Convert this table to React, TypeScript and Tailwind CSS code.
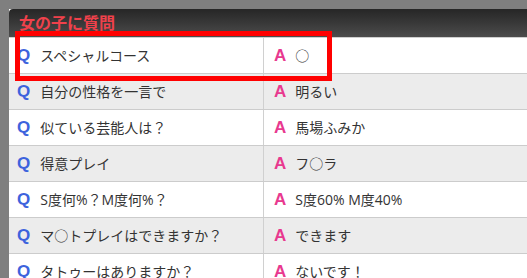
const rows = [
  { q: 'スペシャルコース', a: '○' },
  { q: '自分の性格を一言で', a: '明るい' },
  { q: '似ている芸能人は？', a: '馬場ふみか' },
  { q: '得意プレイ', a: 'フ○ラ' },
  { q: 'S度何%？M度何%？', a: 'S度60% M度40%' },
  { q: 'マ○トプレイはできますか？', a: 'できます' },
  { q: 'タトゥーはありますか？', a: 'ないです！' },
];

export default function App() {
  return (
    <div
      className="relative h-[278px] w-[527px] overflow-hidden bg-[#7f7f7f] pl-[9px] pt-[9px]"
      style={{ fontFamily: '"Open Sans", "Noto Sans CJK JP", sans-serif' }}
    >
      <div className="bg-white">
        {/* header */}
        <div className="flex h-[28px] items-center rounded-tl-[4px] bg-gradient-to-b from-[#262626] to-[#4c4c4c] pl-[10px]">
          <span className="text-[16px] font-bold leading-none text-[#f0414b]">女の子に質問</span>
        </div>
        <div className="h-px bg-[#cfcfcf]" />

        {rows.map((r, i) => (
          <div
            key={i}
            className={`flex h-[36px] border-b border-[#cccccc] text-[14px] text-[#333333] ${
              i % 2 === 1 ? 'bg-[#ececec]' : 'bg-white'
            }`}
          >
            <div className="flex w-[255px] shrink-0 items-center border-r border-[#d0d0d0] pl-[8px]">
              <span
                className="mr-[10px] text-[17px] font-bold text-[#3d63dd]"
                style={{ fontFamily: '"Liberation Sans", Arial, sans-serif' }}
              >
                Q
              </span>
              <span>{r.q}</span>
            </div>
            <div className="flex flex-1 items-center pl-[10px]">
              <span
                className="mr-[9px] text-[17px] font-bold text-[#e8398f]"
                style={{ fontFamily: '"Liberation Sans", Arial, sans-serif' }}
              >
                A
              </span>
              <span>{r.a}</span>
            </div>
          </div>
        ))}
      </div>

      {/* highlight box */}
      <div className="absolute left-[15px] top-[31px] h-[50px] w-[317px] border-[5px] border-[#ff0000]" />
    </div>
  );
}
